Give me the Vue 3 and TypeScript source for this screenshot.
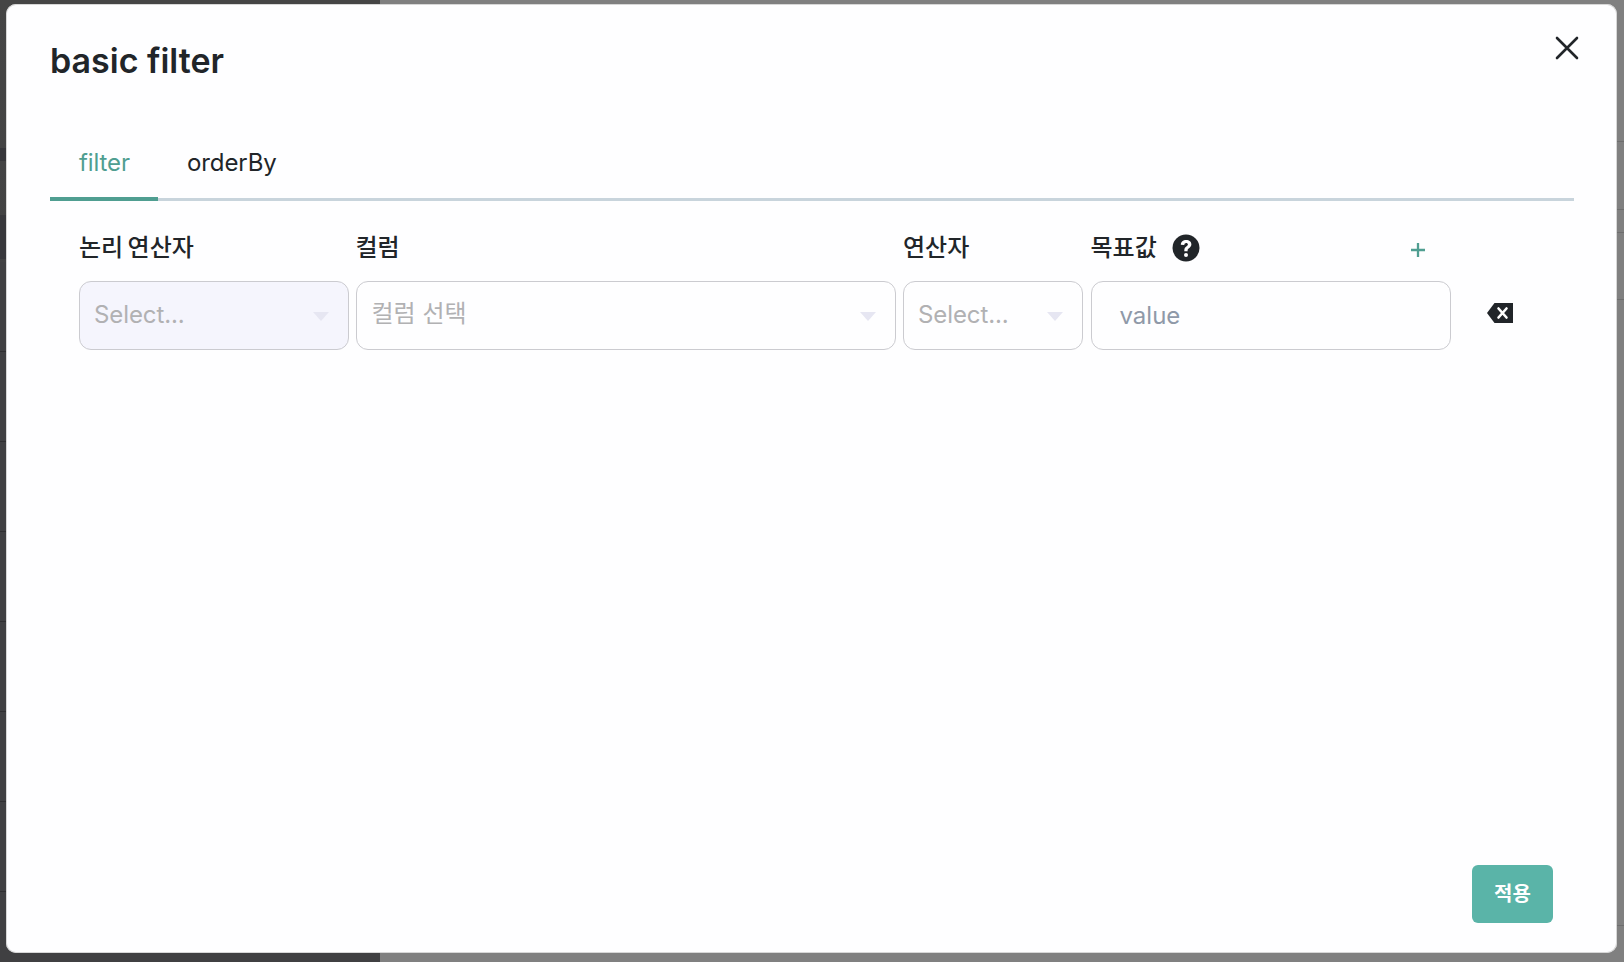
<script setup lang="ts">
interface Col { label: string; cls: string; placeholder?: string; shaded?: boolean; cjk?: boolean }
const cols: Col[] = [
  { label: '논리 연산자', cls: 'c-logic', placeholder: 'Select...', shaded: true },
  { label: '컬럼', cls: 'c-col', placeholder: '컬럼 선택', cjk: true },
  { label: '연산자', cls: 'c-op', placeholder: 'Select...' },
]
</script>

<template>
  <div class="page">
    <div class="back back-left"></div>
    <div class="back back-right"></div>
    <section class="modal">
      <header class="head">
        <h1 class="title">basic filter</h1>
        <button class="close" aria-label="close">
          <svg width="24" height="24" viewBox="0 0 24 24" fill="none" stroke="#212529" stroke-width="2.6" stroke-linecap="round">
            <path d="M2 2 L22 22 M22 2 L2 22" />
          </svg>
        </button>
      </header>

      <nav class="tabs">
        <div class="tab active">filter</div>
        <div class="tab">orderBy</div>
      </nav>

      <div class="grid">
        <div class="row labels">
          <div v-for="c in cols" :key="c.label" class="label" :class="c.cls">{{ c.label }}</div>
          <div class="label c-val target">
            <span>목표값</span>
            <svg class="help" width="28" height="28" viewBox="0 0 28 28">
              <circle cx="14" cy="14" r="13.5" fill="#212529" />
              <path d="M8.8 10.8c0-3 2.3-4.9 5.4-4.9 3 0 5.2 1.8 5.2 4.4 0 2-1.1 3-2.4 3.9-1.1.8-1.4 1.2-1.4 2.4v.6h-3.3v-.8c0-1.9.7-2.9 2-3.9 1-.8 1.6-1.2 1.6-2 0-.9-.7-1.5-1.7-1.5-1.1 0-1.8.7-1.9 1.9z" fill="#fff" />
              <circle cx="14" cy="21" r="2" fill="#fff" />
            </svg>
            <svg class="plus" width="16" height="16" viewBox="0 0 16 16" stroke="#4f9e91" stroke-width="2.3" fill="none">
              <path d="M8 1 V15 M1 8 H15" />
            </svg>
          </div>
        </div>

        <div class="row fields">
          <div v-for="c in cols" :key="c.cls" class="select" :class="[c.cls, { shaded: c.shaded }]">
            <span class="ph" :class="{ cjk: c.cjk }">{{ c.placeholder }}</span>
            <i class="caret"></i>
          </div>
          <div class="input c-val"><span class="val">value</span></div>
          <svg class="del" width="26" height="20" viewBox="0 0 26 20">
            <path d="M7.5 0 H26 V20 H7.5 L0 10 Z" fill="#212529" />
            <path d="M11.5 5.5 L19.5 14.5 M19.5 5.5 L11.5 14.5" stroke="#fff" stroke-width="2.6" stroke-linecap="round" />
          </svg>
        </div>
      </div>

      <footer class="foot">
        <button class="apply">적용</button>
      </footer>
    </section>
  </div>
</template>

<style>
html, body { margin: 0; padding: 0; background: #808080; overflow: hidden; }
</style>

<style scoped>
.page {
  position: relative;
  width: 1624px;
  height: 962px;
  overflow: hidden;
  font-family: Inter, "Noto Sans CJK KR", sans-serif;
  color: #212529;
}
.back { position: absolute; top: 0; bottom: 0; }
.back-left {
  left: 0;
  width: 380px;
  background:
    linear-gradient(#36363a, #36363a) 0 148px / 100% 13px no-repeat,
    linear-gradient(#38383c, #38383c) 0 215px / 100% 44px no-repeat,
    repeating-linear-gradient(to bottom, #404042 0, #404042 89px, #2f2f31 89px, #2f2f31 90px) 0 262px / 100% 700px no-repeat,
    linear-gradient(to bottom, #454545, #3f3f41 50%, #38383a);
}
.back-right {
  left: 380px;
  right: 0;
  background:
    linear-gradient(#6e6e6e, #6e6e6e) 0 141px / 100% 1px no-repeat,
    linear-gradient(#6e6e6e, #6e6e6e) 0 209px / 100% 1px no-repeat,
    linear-gradient(#6e6e6e, #6e6e6e) 0 232px / 100% 1px no-repeat,
    linear-gradient(#6e6e6e, #6e6e6e) 0 299px / 100% 1px no-repeat,
    linear-gradient(#6e6e6e, #6e6e6e) 0 925px / 100% 1px no-repeat,
    #808080;
}
.modal {
  position: absolute;
  left: 6px;
  top: 4px;
  width: 1611px;
  height: 949px;
  box-sizing: border-box;
  padding: 0 43px 0 44px;
  background: #fefeff;
  border-radius: 10px;
  box-shadow: inset 0 0 0 1px rgba(205, 205, 205, 0.8);
  display: flex;
  flex-direction: column;
}
.head {
  position: relative;
  height: 119px;
  flex: none;
}
.title {
  margin: 0;
  padding-top: 34px;
  font-size: 34px;
  line-height: 46px;
  font-weight: 600;
}
.close {
  position: absolute;
  top: 32px;
  right: -5px;
  padding: 0;
  border: 0;
  background: none;
  display: block;
  line-height: 0;
}
.tabs {
  display: flex;
  flex: none;
  height: 78px;
  box-sizing: border-box;
  border-bottom: 3px solid #c8d4dc;
}
.tab {
  padding: 0 27px 0 29px;
  font-size: 24px;
  line-height: 80px;
  height: 78px;
  box-sizing: border-box;
  letter-spacing: -0.1px;
}
.tab.active {
  color: #4f9e91;
  border-bottom: 4px solid #4f9e91;
  width: 108px;
}
.grid {
  flex: 1;
  padding: 0 28px 0 29px;
}
.row {
  display: flex;
  gap: 7.5px;
}
.labels {
  height: 80px;
  align-items: flex-start;
  padding-top: 29px;
  box-sizing: border-box;
}
.label {
  font-size: 24px;
  line-height: 36px;
  font-weight: 500;
  word-spacing: -2px;
}
.c-logic { width: 270px; flex: none; }
.c-col { width: 540px; flex: none; margin-left: -1px; }
.c-op { width: 180px; flex: none; }
.c-val { width: 360px; flex: none; }
.target {
  position: relative;
  display: flex;
  align-items: center;
}
.help { margin-left: 15px; }
.plus {
  position: absolute;
  left: 319px;
  top: 12px;
}
.fields { align-items: center; }
.select, .input {
  height: 69px;
  box-sizing: border-box;
  border: 1px solid #cbcbd0;
  border-radius: 12px;
  background: #fefeff;
  font-size: 24px;
  display: flex;
  align-items: center;
}
.select {
  padding: 0 19px 0 14px;
  justify-content: space-between;
}
.select.shaded { background: #f5f5fd; }
.ph {
  color: #b1b1b3;
  font-size: 24px;
  margin-top: -3px;
  letter-spacing: -0.1px;
}
.ph.cjk {
  margin-top: -9px;
  margin-left: 1px;
  letter-spacing: 0;
}
.caret {
  width: 0;
  height: 0;
  border-left: 8px solid transparent;
  border-right: 8px solid transparent;
  border-top: 9px solid #e6e6f2;
  margin-top: 2px;
}
.input {
  padding: 0 28px;
  color: #8f99a8;
}
.val { margin-top: -1px; }
.del {
  margin-left: 29px;
  margin-top: -6px;
  flex: none;
}
.foot {
  flex: none;
  display: flex;
  justify-content: flex-end;
  padding: 0 21px 30px 0;
}
.apply {
  width: 81px;
  height: 58px;
  border: 0;
  border-radius: 6px;
  background: #5ab4a8;
  color: #fff;
  font-family: Inter, "Noto Sans CJK KR", sans-serif;
  font-size: 20px;
  font-weight: 700;
  padding: 0 0 4px;
}
</style>
